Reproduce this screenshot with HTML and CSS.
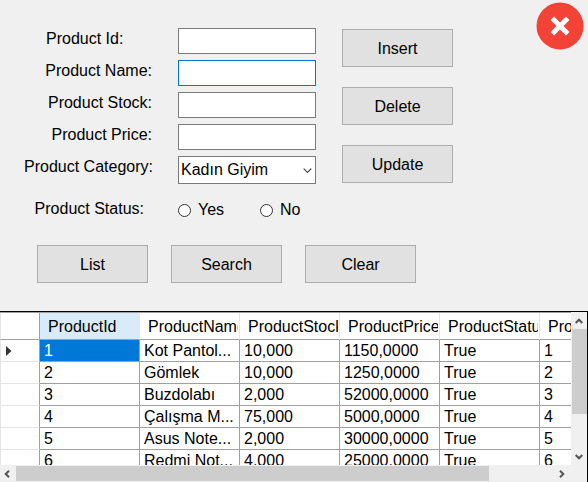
FILE: index.html
```html
<!DOCTYPE html>
<html lang="en">
<head>
<meta charset="utf-8">
<title>Products</title>
<link rel="stylesheet" href="styles.css">
</head>
<body>
<main class="window">
  <form class="panel">
    <button class="close" type="button" aria-label="Close">
      <svg viewBox="0 0 48 48" width="48" height="48"><circle cx="24" cy="24" r="23.5" fill="#f44336"/><path d="M16.3 16.3 31.7 31.7M31.7 16.3 16.3 31.7" stroke="#fff" stroke-width="5"/></svg>
    </button>
    <div class="top">
      <div class="fields">
        <label class="start" for="pid">Product Id:</label><input class="box" id="pid" type="text">
        <label for="pname">Product Name:</label><input class="box active" id="pname" type="text">
        <label for="pstock">Product Stock:</label><input class="box" id="pstock" type="text">
        <label for="pprice">Product Price:</label><input class="box" id="pprice" type="text">
        <label for="pcat">Product Category:</label>
        <div class="combo">
          <select id="pcat"><option>Kadın Giyim</option></select>
          <svg class="chevron" viewBox="0 0 9 6" width="9" height="6"><path d="M.7.7 4.5 4.5 8.3.7" fill="none" stroke="#444" stroke-width="1.2"/></svg>
        </div>
      </div>
      <div class="side">
        <button class="btn" type="button">Insert</button>
        <button class="btn" type="button">Delete</button>
        <button class="btn" type="button">Update</button>
      </div>
    </div>
    <div class="status" role="radiogroup" aria-labelledby="status-label">
      <span class="status-label" id="status-label">Product Status:</span>
      <label class="radio"><input type="radio" name="status">Yes</label>
      <label class="radio"><input type="radio" name="status">No</label>
    </div>
    <div class="actions">
      <button class="btn" type="button">List</button>
      <button class="btn" type="button">Search</button>
      <button class="btn" type="button">Clear</button>
    </div>
  </form>
  <section class="grid">
    <div class="view">
      <table>
        <colgroup><col class="rowhead"><col><col><col><col><col><col></colgroup>
        <thead>
          <tr><th></th><th class="current">ProductId</th><th><div class="name">ProductName</div></th><th><div class="name">ProductStock</div></th><th><div class="name">ProductPrice</div></th><th><div class="name">ProductStatus</div></th><th><div class="name">ProductCategory</div></th></tr>
        </thead>
        <tbody>
          <tr><td class="marker"><svg viewBox="0 0 6 10" width="6" height="10"><path d="M0 0 5.5 5 0 10Z" fill="#333"/></svg></td><td class="selected">1</td><td>Kot Pantol...</td><td>10,000</td><td>1150,0000</td><td>True</td><td>1</td></tr>
          <tr><td></td><td>2</td><td>Gömlek</td><td>10,000</td><td>1250,0000</td><td>True</td><td>2</td></tr>
          <tr><td></td><td>3</td><td>Buzdolabı</td><td>2,000</td><td>52000,0000</td><td>True</td><td>3</td></tr>
          <tr><td></td><td>4</td><td>Çalışma M...</td><td>75,000</td><td>5000,0000</td><td>True</td><td>4</td></tr>
          <tr><td></td><td>5</td><td>Asus Note...</td><td>2,000</td><td>30000,0000</td><td>True</td><td>5</td></tr>
          <tr><td></td><td>6</td><td>Redmi Not...</td><td>4,000</td><td>25000,0000</td><td>True</td><td>6</td></tr>
        </tbody>
      </table>
    </div>
    <div class="scroll vertical">
      <svg viewBox="0 0 8 6" width="8" height="6"><path d="M.7 5 4 1.7 7.3 5" fill="none" stroke="#555" stroke-width="2"/></svg>
      <div class="track"><div class="thumb"></div></div>
      <svg viewBox="0 0 8 6" width="8" height="6"><path d="M.7 1 4 4.3 7.3 1" fill="none" stroke="#555" stroke-width="2"/></svg>
    </div>
    <div class="scroll horizontal">
      <svg viewBox="0 0 6 8" width="6" height="8"><path d="M5 .7 1.7 4 5 7.3" fill="none" stroke="#555" stroke-width="2"/></svg>
      <div class="track"><div class="thumb"></div></div>
      <svg viewBox="0 0 6 8" width="6" height="8"><path d="M1 .7 4.3 4 1 7.3" fill="none" stroke="#555" stroke-width="2"/></svg>
    </div>
  </section>
</main>
</body>
</html>
```
FILE: styles.css
```css
* { box-sizing: border-box; }

body {
  margin: 0;
  background: #f0f0f0;
  color: #000;
  font: 16px/20px "Liberation Sans", Arial, sans-serif;
}

button, input, select { font: inherit; color: inherit; }

.window {
  display: flex;
  flex-direction: column;
  height: 100vh;
}

.panel {
  position: relative;
  flex: none;
  padding: 28px 24px;
}

.close {
  position: absolute;
  top: 2px;
  right: 4px;
  padding: 0;
  border: 0;
  background: none;
  line-height: 0;
}

.top {
  display: flex;
  gap: 26px;
}

.fields {
  display: grid;
  grid-template-columns: 128px 138px;
  grid-auto-rows: min-content;
  gap: 6px 26px;
}

.fields label { line-height: 22px; text-align: right; white-space: nowrap; }

.fields .start { text-align: left; padding-left: 22px; }

.box {
  width: 100%;
  height: 26px;
  padding: 2px 4px;
  border: 1px solid #7a7a7a;
  background: #fff;
}

.box.active { border-color: #0078d7; }

.box:focus { outline: none; }

.combo { position: relative; }

select {
  display: block;
  appearance: none;
  width: 100%;
  height: 28px;
  padding: 0 2px;
  border: 1px solid #7a7a7a;
  border-radius: 0;
  background: #fff;
}

.chevron {
  position: absolute;
  right: 4px;
  top: 12px;
  pointer-events: none;
}

.side {
  display: flex;
  flex-direction: column;
  gap: 20px;
  padding-top: 1px;
}

.btn {
  width: 111px;
  height: 38px;
  padding: 2px 0 0;
  border: 1px solid #adadad;
  background: #e1e1e1;
}

.status {
  display: flex;
  align-items: center;
  margin-top: 14px;
}

.status-label {
  width: 120px;
  margin-right: 34px;
  text-align: right;
}

.radio {
  display: flex;
  align-items: center;
  gap: 7px;
  width: 82px;
  padding-top: 2px;
}

.radio input {
  appearance: none;
  width: 13px;
  height: 13px;
  margin: 0;
  border: 1px solid #333;
  border-radius: 50%;
  background: #fff;
}

.actions {
  display: flex;
  gap: 23px;
  margin: 25px 0 0 13px;
}

.grid {
  flex: 1;
  min-height: 0;
  display: grid;
  grid-template: minmax(0, 1fr) 17px / minmax(0, 1fr) 16px;
  border: 1px solid #000;
  border-width: 1px 1px 0 0;
}

.view {
  overflow: hidden;
  border-top: 1px solid #a0a0a0;
  background: #fff;
}

table {
  width: 640px;
  table-layout: fixed;
  border-collapse: separate;
  border-spacing: 0;
}

col { width: 100px; }

.rowhead { width: 40px; }

th, td {
  overflow: hidden;
  white-space: nowrap;
  text-align: left;
  border-right: 1px solid #a0a0a0;
  border-bottom: 1px solid #a0a0a0;
}

th {
  height: 27px;
  padding: 2px 1px 0 8px;
  border-right-color: #e5e5e5;
  font-weight: normal;
}

.name { overflow: hidden; }

td {
  height: 22px;
  padding: 1px 4px 0;
}

th:first-child, td:first-child {
  border-left: 1px solid #e5e5e5;
  border-right-color: #a0a0a0;
}

td:first-child { border-bottom-color: #e5e5e5; }

.current { background: #d9ebf9; border-right-color: #d9ebf9; }

td.marker { padding-left: 5px; line-height: 0; }

.selected { background: #0078d7; color: #fff; }

.scroll {
  display: flex;
  align-items: center;
  background: #f0f0f0;
}

.vertical { flex-direction: column; padding: 6px 0 5px; }

.horizontal { padding: 0 6px 0 4px; }

.track { flex: 1; min-width: 0; }

.thumb { background: #cdcdcd; }

.vertical .track { margin: 5px 0; }

.vertical .thumb { width: 15px; height: 71%; }

.horizontal .track { margin: 0 6px; }

.horizontal .thumb { width: 88%; height: 15px; }
```
